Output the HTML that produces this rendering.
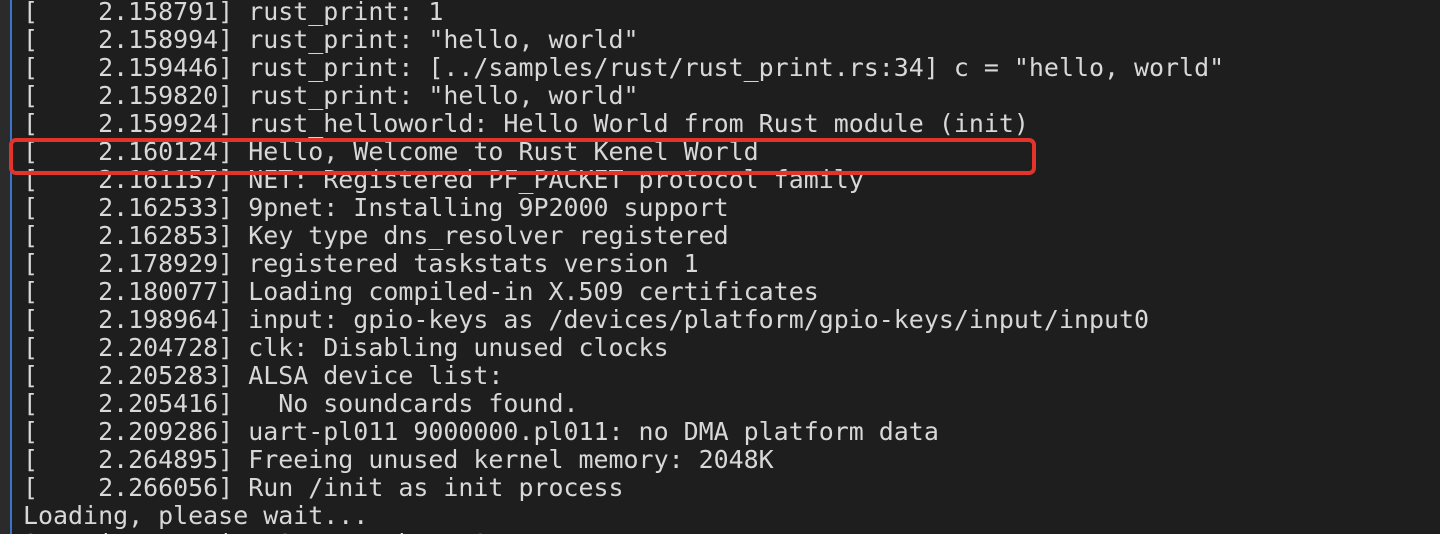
<!DOCTYPE html>
<html style="height:534px;overflow:hidden"><head><meta charset="utf-8"><style>
html,body{margin:0;padding:0;}
body{width:1440px;height:534px;overflow:hidden;background:#1e1e1e;position:relative;}
.gut{position:absolute;left:0;top:0;width:10px;height:534px;background:#2b2b2b;}
.bar{position:absolute;left:10px;top:0;width:2px;height:534px;background:#3b73c6;}
pre{position:absolute;left:23px;top:-2px;margin:0;font-family:"DejaVu Sans Mono","Liberation Mono",monospace;font-size:24.95px;line-height:28px;color:#d8d8d8;white-space:pre;}
.wrap{position:absolute;left:0;top:0;width:1440px;height:534px;overflow:hidden;}
.box{position:absolute;left:9px;top:138px;width:1019px;height:29px;border:4px solid #e2342a;border-radius:7px;}
</style></head><body>
<div class="wrap">
<div class="gut"></div><div class="bar"></div>
<pre>[    2.158791] rust_print: 1
[    2.158994] rust_print: "hello, world"
[    2.159446] rust_print: [../samples/rust/rust_print.rs:34] c = "hello, world"
[    2.159820] rust_print: "hello, world"
[    2.159924] rust_helloworld: Hello World from Rust module (init)
[    2.160124] Hello, Welcome to Rust Kenel World
[    2.161157] NET: Registered PF_PACKET protocol family
[    2.162533] 9pnet: Installing 9P2000 support
[    2.162853] Key type dns_resolver registered
[    2.178929] registered taskstats version 1
[    2.180077] Loading compiled-in X.509 certificates
[    2.198964] input: gpio-keys as /devices/platform/gpio-keys/input/input0
[    2.204728] clk: Disabling unused clocks
[    2.205283] ALSA device list:
[    2.205416]   No soundcards found.
[    2.209286] uart-pl011 9000000.pl011: no DMA platform data
[    2.264895] Freeing unused kernel memory: 2048K
[    2.266056] Run /init as init process
Loading, please wait...
Starting version 245.4-4ubuntu3.15</pre>
<div class="box"></div>
</div>
</body></html>
